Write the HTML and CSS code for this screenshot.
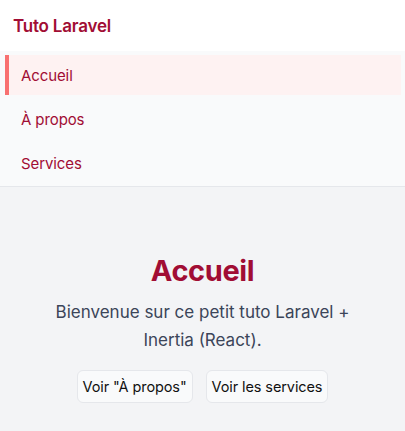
FILE: index.html
```html
<!DOCTYPE html>
<html lang="fr">
<head>
<meta charset="utf-8">
<title>Tuto Laravel</title>
<link rel="stylesheet" href="styles.css">
</head>
<body>
<header class="topbar">
  <span class="brand">Tuto Laravel</span>
</header>
<nav class="menu">
  <a class="menu-item active" href="#">Accueil</a>
  <a class="menu-item" href="#">À propos</a>
  <a class="menu-item" href="#">Services</a>
</nav>
<main class="content">
  <h1 class="title">Accueil</h1>
  <p class="lead">Bienvenue sur ce petit tuto Laravel + Inertia (React).</p>
  <div class="actions">
    <a class="btn" href="#">Voir "À propos"</a>
    <a class="btn" href="#">Voir les services</a>
  </div>
</main>
</body>
</html>
```
FILE: styles.css
```css
* { box-sizing: border-box; }
html, body { margin: 0; padding: 0; }
body {
  font-family: Inter, "Noto Sans", sans-serif;
  background: #f3f4f6;
  min-height: 431px;
}
.topbar {
  height: 51px;
  background: #ffffff;
  display: flex;
  align-items: center;
  padding: 0 13px;
}
.brand {
  font-size: 17px;
  font-weight: 600;
  color: #a10d34;
  letter-spacing: -0.2px;
}
.menu {
  background: #f9fafb;
  border-bottom: 1px solid #e5e7eb;
  display: flex;
  flex-direction: column;
  gap: 4px;
  padding: 4px 4px 3px 5px;
}
.menu-item {
  height: 40px;
  display: flex;
  align-items: center;
  padding-left: 12px;
  border-left: 4px solid transparent;
  color: #a10d34;
  text-decoration: none;
  font-size: 15px;
  letter-spacing: -0.1px;
}
.menu-item.active {
  background: #fef2f2;
  border-left-color: #f87171;
}
.content {
  padding: 66px 24px 24px;
  display: flex;
  flex-direction: column;
  align-items: center;
  text-align: center;
}
.title {
  margin: 0;
  font-size: 29px;
  line-height: 36px;
  font-weight: 700;
  color: #a10d34;
  letter-spacing: -0.4px;
}
.lead {
  margin: 9px 0 0;
  max-width: 320px;
  font-size: 17px;
  line-height: 28px;
  color: #3b4559;
}
.actions {
  margin-top: 16px;
  display: flex;
  gap: 13px;
}
.btn {
  height: 33px;
  display: flex;
  align-items: center;
  padding: 0 5px;
  background: #f9fafb;
  border: 1px solid #e5e7eb;
  border-radius: 6px;
  color: #111111;
  text-decoration: none;
  font-size: 14.5px;
  letter-spacing: -0.1px;
}
```
